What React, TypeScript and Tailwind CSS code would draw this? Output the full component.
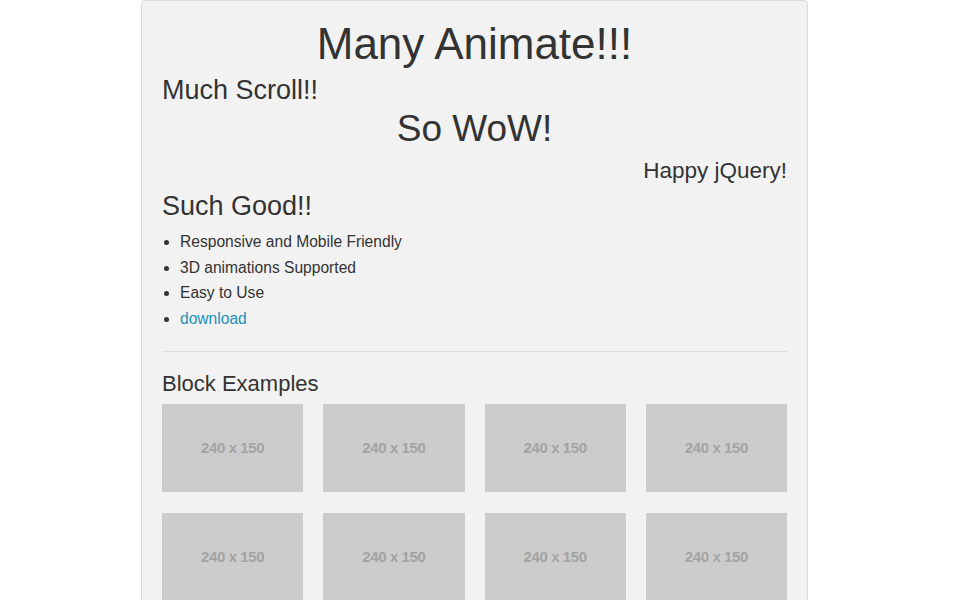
const features = ['Responsive and Mobile Friendly', '3D animations Supported', 'Easy to Use'];

const blocks = Array.from({ length: 8 }, (_, i) => i);

export default function App() {
  return (
    <div className="min-h-screen bg-white font-['Liberation_Sans',Arial,sans-serif] text-[#333]">
      <div className="ml-[141px] w-[667px] rounded-[4px] border border-[#dcdcdc] bg-[#f2f2f2] px-[20px] pb-[30px]">
        <h1 className="mt-[18px] text-center text-[44px] leading-[50px]">Many Animate!!!</h1>
        <h2 className="mt-[6px] text-[27px] leading-[30px]">Much Scroll!!</h2>
        <h2 className="mt-[3px] text-center text-[37px] leading-[42px]">So WoW!</h2>
        <h3 className="mt-[8px] text-right text-[22.5px] leading-[26px]">Happy jQuery!</h3>
        <h2 className="mt-[7px] text-[27px] leading-[30px]">Such Good!!</h2>

        <ul className="mt-[8px] list-disc pl-[18px] text-[15.6px] leading-[25.7px]">
          {features.map((f) => (
            <li key={f}>{f}</li>
          ))}
          <li>
            <a href="#" className="text-[#1e90b8]">download</a>
          </li>
        </ul>

        <hr className="mt-[19px] border-0 border-t border-[#dddddd]" />

        <h3 className="mt-[19px] text-[22px] leading-[26px]">Block Examples</h3>

        {/* placeholder blocks */}
        <div className="mt-[7px] grid grid-cols-4 gap-x-[20px] gap-y-[21px]">
          {blocks.map((i) => (
            <div
              key={i}
              className="flex h-[88px] items-center justify-center bg-[#cccccc] text-[15px] font-bold tracking-[-0.4px] text-[#a3a3a3]"
            >
              240 x 150
            </div>
          ))}
        </div>
      </div>
    </div>
  );
}
